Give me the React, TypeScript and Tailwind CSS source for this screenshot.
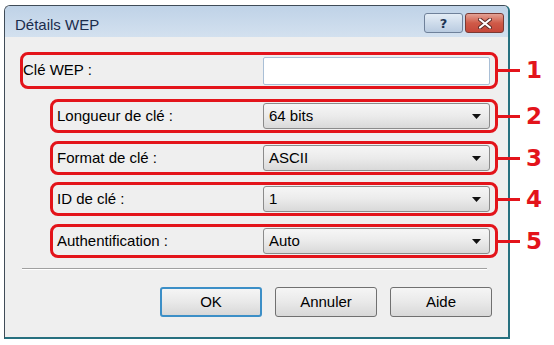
import React from "react";

const Arrow = () => (
  <svg width="9" height="5" viewBox="0 0 9 5" className="shrink-0">
    <path d="M0 0 H9 L4.5 5 Z" fill="#111" />
  </svg>
);

function Select({ value }: { value: string }) {
  return (
    <div className="shrink-0 w-[227px] h-[26px] flex items-center justify-between pl-[5px] pr-[8px] rounded-[3px] border border-[#8b8b8b] bg-gradient-to-b from-[#f6f6f6] via-[#ebebeb] to-[#d9d9d9] text-[15px] text-black">
      <span>{value}</span>
      <Arrow />
    </div>
  );
}

function Marker({ n }: { n: string }) {
  return (
    <div className="shrink-0 flex items-center">
      <div className="shrink-0 w-[22px] h-[3px] bg-[#e3141b]" />
      <span className="ml-[6px] font-['DejaVu_Sans',sans-serif] font-bold text-[23px] leading-none text-[#e3141b]">
        {n}
      </span>
    </div>
  );
}

function Row({
  label,
  value,
  n,
  mt,
}: {
  label: string;
  value: string;
  n: string;
  mt: string;
}) {
  return (
    <div className={`flex items-center ml-[45px] ${mt}`}>
      <div className="shrink-0 w-[448px] h-[34px] flex items-center justify-between pl-[4px] pr-[5px] rounded-[8px] border-[3px] border-[#e3141b]">
        <span className="text-[15px] text-black">{label}</span>
        <Select value={value} />
      </div>
      <Marker n={n} />
    </div>
  );
}

function Btn({ label, primary }: { label: string; primary?: boolean }) {
  return (
    <div
      className={
        "shrink-0 w-[102px] h-[30px] flex items-center justify-center rounded-[3px] bg-gradient-to-b from-[#f5f5f5] via-[#e9e9e9] to-[#d8d8d8] text-[15px] text-black " +
        (primary
          ? "border-2 border-[#3c8fc7]"
          : "border border-[#707070]")
      }
    >
      {label}
    </div>
  );
}

export default function App() {
  return (
    <div className="w-[554px] h-[345px] bg-white pt-[5px] pl-[4px] font-['Liberation_Sans',Arial,sans-serif]">
      <div className="w-[506px] h-[334px] flex flex-col rounded-t-[6px] border border-[#3f4b57] border-r-2 border-b-2 border-r-[#27707f] border-b-[#27707f] bg-[#efefef]">
        {/* title bar */}
        <div className="h-[31px] flex items-start justify-between pl-[10px] pr-[4px] pt-[7px] rounded-t-[5px] bg-gradient-to-b from-[#bfd2e7] to-[#d3e1ef]">
          <span className="mt-[4px] text-[15px] leading-none text-[#1b2d4d]">
            Détails WEP
          </span>
          <div className="flex gap-[2px]">
            <div className="w-[39px] h-[20px] flex items-center justify-center rounded-[3px] border border-[#6f819a] bg-gradient-to-b from-[#e4edf6] to-[#b9cbe0]">
              <span className="font-['DejaVu_Sans',sans-serif] font-bold text-[13px] leading-none text-[#1e3553]">
                ?
              </span>
            </div>
            <div className="w-[39px] h-[20px] flex items-center justify-center rounded-[3px] border border-[#7a3a34] bg-gradient-to-b from-[#e3a195] via-[#cf5a48] to-[#c5473a]">
              <svg width="14" height="11" viewBox="0 0 14 11">
                <path
                  d="M2 1.5 L12 9.5 M12 1.5 L2 9.5"
                  stroke="#5a2a26"
                  strokeWidth="4"
                  strokeLinecap="round"
                />
                <path
                  d="M2 1.5 L12 9.5 M12 1.5 L2 9.5"
                  stroke="#ffffff"
                  strokeWidth="2.2"
                  strokeLinecap="round"
                />
              </svg>
            </div>
          </div>
        </div>

        {/* body */}
        <div className="flex flex-col pt-[15px]">
          <div className="flex items-center ml-[15px]">
            <div className="shrink-0 w-[478px] h-[37px] flex items-center justify-between pl-[0px] pr-[5px] rounded-[8px] border-[3px] border-[#e3141b]">
              <span className="text-[15px] text-black">Clé WEP :</span>
              <div className="shrink-0 w-[227px] h-[28px] bg-white border border-[#a9bfd6] rounded-[2px]" />
            </div>
            <Marker n="1" />
          </div>

          <Row label="Longueur de clé :" value="64 bits" n="2" mt="mt-[10px]" />
          <Row label="Format de clé :" value="ASCII" n="3" mt="mt-[8px]" />
          <Row label="ID de clé :" value="1" n="4" mt="mt-[7px]" />
          <Row label="Authentification :" value="Auto" n="5" mt="mt-[8px]" />

          <div className="ml-[17px] mt-[10px] w-[465px] border-t border-b border-t-[#a0a0a0] border-b-white" />

          <div className="flex justify-end gap-[13px] pr-[16px] mt-[17px]">
            <Btn label="OK" primary />
            <Btn label="Annuler" />
            <Btn label="Aide" />
          </div>
        </div>
      </div>
    </div>
  );
}
